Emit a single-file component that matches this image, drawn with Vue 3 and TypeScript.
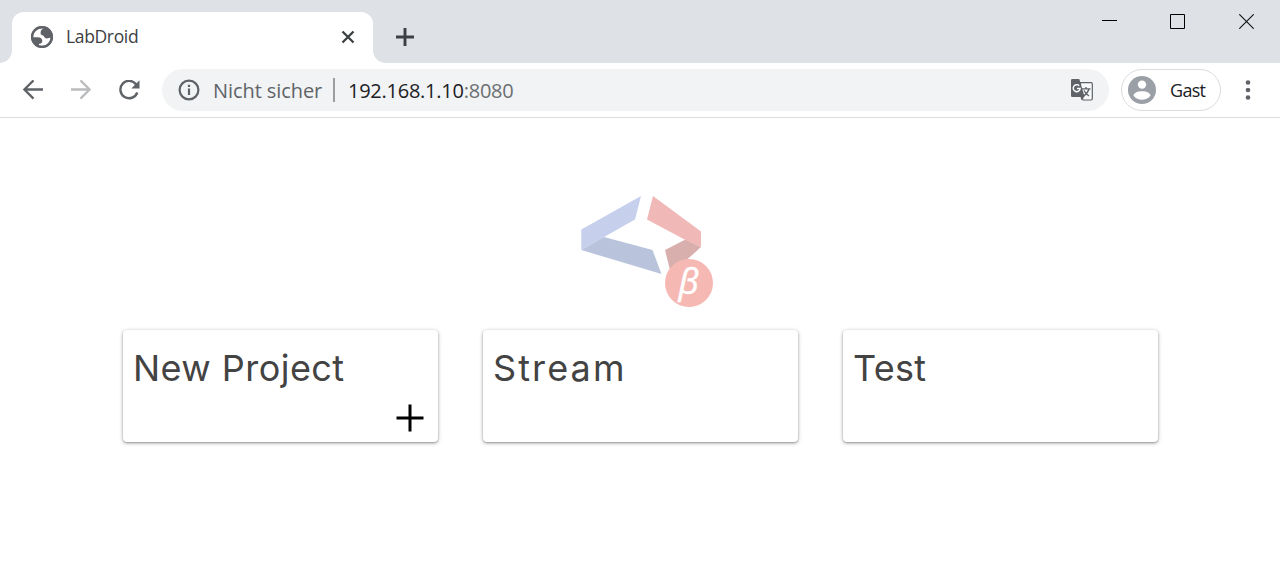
<script setup lang="ts">
interface Project {
  name: string
  spacing: number
  create?: boolean
}

const projects: Project[] = [
  { name: 'New Project', spacing: 0.45, create: true },
  { name: 'Stream', spacing: 2.1 },
  { name: 'Test', spacing: 0.3 },
]
</script>

<template>
  <div class="window">
    <header class="tabs">
      <div class="tab">
        <svg class="globe" width="22" height="22" viewBox="0 0 22 22">
          <circle cx="11" cy="11" r="11" fill="#5f6368" />
          <path fill="#fff" d="M12.8 2.200C11.300 3 10.300 3.800 9.900 5 9.500 6.200 9.500 7.500 10 8.600 10.800 9.700 12.300 9.200 12.900 10.300 13.300 11.500 14.200 12.400 16 12.400 17.300 12.400 18.500 11.800 19.700 11.800 19.200 16 16 19.700 11.500 19.800 10.200 19.800 9 19.600 8 19.200L8 17.800C9.500 17.800 10.900 17 11.200 15.700 11.500 14.200 10.800 13 9.700 12.100 8.400 11.100 6 11.300 4 11.200L2.200 11.200C2.100 5.500 6.800 1.800 12.800 2.200Z" />
          <circle cx="11" cy="11" r="9.900" fill="none" stroke="#5f6368" stroke-width="2.200" />
        </svg>
        <span class="tab-title">LabDroid</span>
        <svg class="tab-close" width="14" height="14" viewBox="0 0 14 14">
          <path d="M1.500 1.500 12.500 12.500M12.500 1.500 1.500 12.500" stroke="#3c4043" stroke-width="2.300" />
        </svg>
      </div>
      <svg class="new-tab" width="18" height="18" viewBox="0 0 18 18">
        <path d="M9 0V18M0 9H18" stroke="#3c4043" stroke-width="2.900" />
      </svg>
      <div class="controls">
        <svg width="15" height="15" viewBox="0 0 15 15"><path d="M0 6.500H15" stroke="#000" /></svg>
        <svg width="15" height="15" viewBox="0 0 15 15"><path d="M.5.5H14.500V14.500H.5Z" fill="none" stroke="#000" /></svg>
        <svg class="window-close" width="15" height="15" viewBox="0 0 15 15"><path d="M.3.3 14.700 14.700M14.700.3.3 14.700" stroke="#111" stroke-width="1.100" /></svg>
      </div>
    </header>

    <div class="toolbar">
      <svg class="nav back" width="20" height="20" viewBox="0 0 20 20">
        <path d="M20 9.500H1.500M10.500.4 1.400 9.500 10.500 18.600" fill="none" stroke="#5f6368" stroke-width="2.300" />
      </svg>
      <svg class="nav forward" width="20" height="20" viewBox="0 0 20 20">
        <path d="M0 9.500H18.500M9.500.4 18.600 9.500 9.500 18.600" fill="none" stroke="#babcbe" stroke-width="2.300" />
      </svg>
      <svg class="nav reload" width="21" height="20" viewBox="0 0 21 20">
        <path d="M17.200 4.500A8.700 8.700 0 1 0 18.300 12.500" fill="none" stroke="#5f6368" stroke-width="2.400" />
        <path d="M20.500.3V8.500H12.300Z" fill="#5f6368" />
      </svg>
      <div class="address">
        <svg class="info" width="22" height="22" viewBox="0 0 22 22">
          <circle cx="11" cy="11" r="9.400" fill="none" stroke="#5f6368" stroke-width="2.200" />
          <path d="M11 9.600V16M11 5.800V8" stroke="#5f6368" stroke-width="2.200" />
        </svg>
        <span class="security">Nicht sicher</span>
        <span class="divider"></span>
        <span class="url">192.168.1.10<span class="port">:8080</span></span>
        <svg class="translate" width="22" height="22" viewBox="0 0 22 22">
          <path d="M9.500 3.700H20.200Q21.300 3.700 21.300 4.800V19.800Q21.300 21 20.200 21H12L9.500 14Z" fill="#f8f9fa" stroke="#5f6368" stroke-width="1.200" />
          <path d="M11 9.800H19.500M15 8V10M18 10C17.200 13 15.500 15 12.700 17M13 11.500C14 14 16 15.500 18 17" fill="none" stroke="#5f6368" stroke-width="1.300" />
          <path d="M1.200 0H8.300L13.500 17.500 10.500 21.300 9.500 18H1.200Q0 18 0 16.800V1.200Q0 0 1.200 0Z" fill="#5f6368" />
          <path d="M8.200 6.700A3.500 3.500 0 1 0 9.200 9.500H5.900" fill="none" stroke="#fff" stroke-width="1.400" />
        </svg>
      </div>
      <div class="profile">
        <svg width="28" height="28" viewBox="0 0 28 28">
          <circle cx="14" cy="14" r="14" fill="#9aa0a6" />
          <circle cx="14" cy="8.600" r="4.200" fill="#fff" />
          <path d="M5.500 19.500C6 13.800 22 13.800 22.500 19.500 18.500 25.300 9.500 25.300 5.500 19.500Z" fill="#fff" />
        </svg>
        <span>Gast</span>
      </div>
      <svg class="more" width="6" height="20" viewBox="0 0 6 20">
        <circle v-for="y in [2.500, 10, 17.500]" :key="y" cx="3" :cy="y" r="2.300" fill="#5f6368" />
      </svg>
    </div>

    <main>
      <svg class="logo" width="134" height="112" viewBox="580 195 134 112">
        <path d="M581.300 229.500 641 196 635 219.500 604 237 581.300 250Z" fill="#c6d0ed" />
        <path d="M604 237 652.500 250 661.500 274 581.300 250Z" fill="#b9c4dc" />
        <path d="M685.500 239.500 701 247 671 274 665 250Z" fill="#d8afac" />
        <path d="M653 196 701 231.500V247L685.500 240 647 219.500Z" fill="#f0b8b6" />
        <circle cx="689" cy="283" r="24" fill="#f6b8b3" />
        <text x="678.500" y="293.500" class="beta">β</text>
      </svg>
      <section class="cards">
        <article v-for="project in projects" :key="project.name" class="card">
          <h2 :style="{ letterSpacing: `${project.spacing}px` }">{{ project.name }}</h2>
          <svg v-if="project.create" class="plus" width="28" height="28" viewBox="0 0 28 28">
            <path d="M14 .500V27.500M.5 14H27.500" stroke="#000" stroke-width="3" />
          </svg>
        </article>
      </section>
    </main>
  </div>
</template>

<style>
body {
  margin: 0;
  background: #fff;
}
</style>

<style scoped>
.window {
  height: 568px;
  overflow: hidden;
  background: #fff;
  font-family: 'Open Sans', 'Noto Sans', sans-serif;
}
svg {
  display: block;
  flex: none;
}
.tabs {
  display: flex;
  height: 63px;
  padding-left: 12px;
  box-sizing: border-box;
  background: #dee1e6;
}
.tab {
  position: relative;
  display: flex;
  align-items: center;
  width: 361px;
  height: 51px;
  margin-top: 12px;
  padding: 0 18px 2px 19px;
  box-sizing: border-box;
  border-radius: 12px 12px 0 0;
  background: #fff;
}
.tab::before,
.tab::after {
  content: '';
  position: absolute;
  bottom: 0;
  width: 12px;
  height: 12px;
}
.tab::before {
  left: -12px;
  background: radial-gradient(circle at 0 0, transparent 11.5px, #fff 12px);
}
.tab::after {
  right: -12px;
  background: radial-gradient(circle at 100% 0, transparent 11.5px, #fff 12px);
}
.tab-title {
  margin: 0 0 1px 13px;
  font-size: 17.5px;
  letter-spacing: -0.35px;
  line-height: 24px;
  color: #3c4043;
}
.tab-close {
  margin-left: auto;
}
.new-tab {
  margin: 28px 0 0 23px;
}
.controls {
  display: flex;
  gap: 53px;
  margin: 14px 26px 0 auto;
}
.window-close {
  margin-left: 1px;
}
.toolbar {
  display: flex;
  align-items: center;
  height: 55px;
  padding: 0 29px 0 23px;
  box-sizing: border-box;
  border-bottom: 1px solid #dadce0;
  background: #fff;
}
.forward {
  margin-left: 28px;
}
.reload {
  margin-left: 28px;
}
.address {
  display: flex;
  align-items: center;
  width: 947px;
  height: 42px;
  margin-left: 22px;
  padding: 0 16px 0 16px;
  box-sizing: border-box;
  border-radius: 21px;
  background: #f1f3f4;
  font-size: 20px;
  white-space: nowrap;
}
.security {
  width: 109px;
  margin-left: 13px;
  letter-spacing: -0.08px;
  color: #5f6368;
}
.divider {
  width: 2px;
  height: 24px;
  margin-left: 11px;
  background: #9b9ea1;
}
.url {
  margin-left: 13px;
  letter-spacing: -0.25px;
  color: #202124;
}
.port {
  color: #6b6f73;
}
.translate {
  margin-left: auto;
}
.profile {
  display: flex;
  align-items: center;
  width: 100px;
  height: 42px;
  margin-left: 12px;
  padding-left: 6px;
  box-sizing: border-box;
  border: 1px solid #dadce0;
  border-radius: 21px;
  font-size: 18px;
  color: #202124;
}
.profile span {
  margin-left: 14px;
  letter-spacing: -0.7px;
}
.more {
  margin-left: auto;
}
main {
  padding: 77px 122px 0 123px;
}
.logo {
  margin-left: 457px;
}
.beta {
  font: italic 35px 'Open Sans', sans-serif;
  fill: #fff;
  stroke: #fff;
  stroke-width: 0.5px;
}
.cards {
  display: grid;
  grid-template-columns: repeat(3, 315px);
  gap: 45px;
  margin-top: 23px;
}
.card {
  display: flex;
  flex-direction: column;
  height: 112px;
  padding: 14px 14px 10px 10px;
  box-sizing: border-box;
  border-radius: 4px;
  background: #fff;
  box-shadow: 0 1px 4px rgba(0, 0, 0, 0.28), 0 1px 2px rgba(0, 0, 0, 0.26);
}
h2 {
  margin: 0;
  font: 400 36px/48px Inter, sans-serif;
  color: #434343;
  white-space: nowrap;
}
.plus {
  margin: auto 0 0 auto;
}
</style>
